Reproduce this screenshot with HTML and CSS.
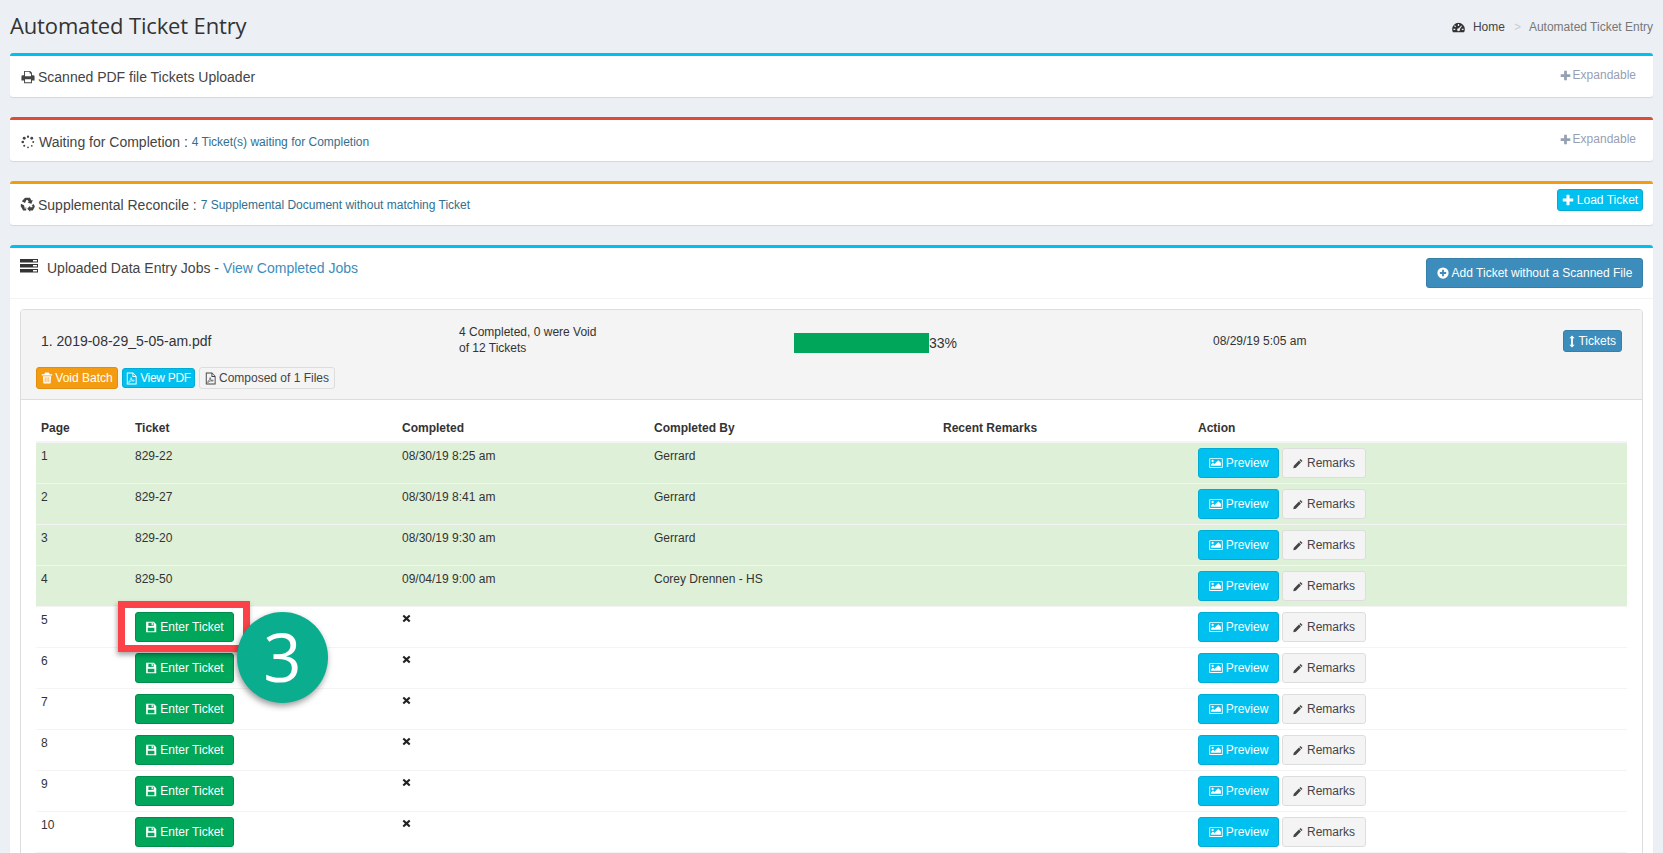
FILE: index.html
```html
<!DOCTYPE html>
<html lang="en">
<head>
<meta charset="utf-8">
<title>Automated Ticket Entry</title>
<link rel="stylesheet" href="styles.css">
</head>
<body>
<svg class="sprite" aria-hidden="true">
  <symbol id="i-print" viewBox="0 0 16 16"><path fill-rule="evenodd" d="M3.5 1h7L12.5 3v3H14a1.5 1.5 0 0 1 1.5 1.5V12h-3v3h-9v-3H.5V7.500A1.500 1.500 0 0 1 2 6h1.500zM4.600 2.100V7h6.800V4H9.800V2.100zM4.600 10.500v3.400h6.800v-3.400z"/></symbol>
  <symbol id="i-spin" viewBox="0 0 16 16"><circle cx="8" cy="2" r="1.300"/><circle cx="12.300" cy="3.700" r="1.600"/><circle cx="14" cy="8" r="1.100"/><circle cx="12.300" cy="12.300" r="1"/><circle cx="8" cy="14" r="1"/><circle cx="3.700" cy="12.300" r="1.200"/><circle cx="2" cy="8" r="1.500"/><circle cx="3.700" cy="3.700" r="1.700"/></symbol>
  <symbol id="i-recycle" viewBox="0 0 16 16"><path d="M5.400.8h5.200l1.600 2.800 1.400-.8-1.300 4.400-4.300-1 1.400-.8-1.300-2.300H6.900L5.300 6.400 1.900 4.500zM14.400 7.400l1.500 2.600-2.300 4.300H10.800v1.500L7.700 12.400l3.100-3.100v1.500h2.100l.6-1.100-1.100-.6zM1 7.200l3.300 1.600 1 4.200H2.700l-2-3.200zM6 10.800h.6v3.500H3.300l-1-1.700h3.700z"/></symbol>
  <symbol id="i-server" viewBox="0 0 18 14"><path fill-rule="evenodd" d="M0 0h18v3.600H0zM13 1v1.600h4V1zM0 5h18v3.600H0zM13 6v1.600h4V6zM0 10h18v3.600H0zM13 11v1.600h4V11z"/></symbol>
  <symbol id="i-plus" viewBox="0 0 16 16"><path d="M6 1h4v5h5v4h-5v5H6v-5H1V6h5z"/></symbol>
  <symbol id="i-pluscircle" viewBox="0 0 16 16"><path fill-rule="evenodd" d="M8 .5a7.500 7.500 0 1 1 0 15 7.500 7.500 0 0 1 0-15zM6.800 3.800v3H3.800v2.400h3v3h2.400v-3h3V6.800h-3v-3z"/></symbol>
  <symbol id="i-trash" viewBox="0 0 16 16"><path fill-rule="evenodd" d="M5.500 .8h5l1.100 2.200H15v1.500H1V3h3.400zM2.500 5.500h11l-.8 9.700H3.300zM5 7v6.500h1V7zM7.500 7v6.500h1V7zM10 7v6.500h1V7z"/></symbol>
  <symbol id="i-pdf" viewBox="0 0 14 16"><path fill-rule="evenodd" d="M1 .3h8L13.500 5v10.700H1zM2.200 1.500v13h10.100V6H8.200V1.500zM9.400 2.100v2.700h2.600z"/><path d="M6.300 6.800c.9 0 .6 2 1.100 3 .5.900 3-.3 3.100.9.100 1-2.300.3-3.400.3-1.200.1-3.100 2.500-3.800 1.800-.6-.8 2-1.800 2.500-3 .5-1.100 0-3 .5-3z" fill="none" stroke="currentColor" stroke-width=".9"/></symbol>
  <symbol id="i-updown" viewBox="0 0 8 16"><path d="M4 0l3.500 3.800H5.200v8.400h2.300L4 16 .5 12.200h2.300V3.800H.5z"/></symbol>
  <symbol id="i-image" viewBox="0 0 18 16"><path fill-rule="evenodd" d="M1 1.500h16a1 1 0 0 1 1 1v11a1 1 0 0 1-1 1H1a1 1 0 0 1-1-1v-11a1 1 0 0 1 1-1zM1.200 2.700v10.600h15.600V2.700zM2.500 11.800V9.700l2.500-2.500 2 2 5-5 3.500 3.500v4.100zM4.500 3.700a1.500 1.500 0 1 1 0 3 1.500 1.500 0 0 1 0-3z"/></symbol>
  <symbol id="i-pencil" viewBox="0 0 16 16"><path d="M12 .8l3.200 3.200-1.700 1.700-3.200-3.200zM9.500 3.300l3.200 3.200-8.200 8.200L.4 15.600l.9-4.100z"/></symbol>
  <symbol id="i-save" viewBox="0 0 16 16"><path fill-rule="evenodd" d="M1.500 1h10.300L15 4.200V15H1.500zM4.500 2.200v4.300h7V2.200zM3.700 9v4.800h8.800V9zM8.800 2.800h1.600v3H8.800z"/></symbol>
  <symbol id="i-times" viewBox="0 0 16 16"><path d="M3.500 1.500L8 5.500l4.500-4 2.500 2.500-4.200 4 4.200 4-2.500 2.500-4.500-4-4.500 4L1 12l4.200-4L1 4z"/></symbol>
  <symbol id="i-gauge" viewBox="0 0 16 16"><path fill-rule="evenodd" d="M8 2.200A7.800 7.800 0 0 0 .2 10c0 1.500.4 2.700 1 3.800h13.600c.6-1.100 1-2.300 1-3.800A7.800 7.800 0 0 0 8 2.200zM7.200 3.800h1.600v2.200H7.200zM3.500 5.200l1.500 1.500-1 1-1.500-1.500zM1.800 9.500h2.200v1.500H1.800zM12 9.500h2.200v1.500H12zM11.500 5.500l.8.700-2.600 3.600a1.800 1.800 0 1 1-1.300-.9z"/></symbol>
</svg>

<header class="page-head">
  <h1 class="page-title">Automated Ticket Entry</h1>
  <nav class="crumbs">
    <svg class="ico-gauge"><use href="#i-gauge"/></svg>
    <a class="crumb-home">Home</a>
    <span class="crumb-sep">&gt;</span>
    <span class="crumb-here">Automated Ticket Entry</span>
  </nav>
</header>

<section class="box box-info">
  <div class="box-head">
    <h3 class="box-title"><svg class="ico"><use href="#i-print"/></svg>Scanned PDF file Tickets Uploader</h3>
    <span class="expand"><svg class="ico-sm"><use href="#i-plus"/></svg>Expandable</span>
  </div>
</section>

<section class="box box-danger">
  <div class="box-head">
    <h3 class="box-title"><svg class="ico ico-spin"><use href="#i-spin"/></svg>Waiting for Completion : <small class="sub">4 Ticket(s) waiting for Completion</small></h3>
    <span class="expand"><svg class="ico-sm"><use href="#i-plus"/></svg>Expandable</span>
  </div>
</section>

<section class="box box-warning">
  <div class="box-head">
    <h3 class="box-title title-tight"><svg class="ico ico-recycle"><use href="#i-recycle"/></svg>Supplemental Reconcile : <small class="sub">7 Supplemental Document without matching Ticket</small></h3>
    <button class="btn btn-xs btn-cyan btn-load"><svg class="ico-sm"><use href="#i-plus"/></svg>Load Ticket</button>
  </div>
</section>

<section class="box box-info box-jobs">
  <div class="jobs-head">
    <h3 class="jobs-title"><svg class="ico-server"><use href="#i-server"/></svg>Uploaded Data Entry Jobs - <a class="link">View Completed Jobs</a></h3>
    <button class="btn btn-blue"><svg class="ico-sm"><use href="#i-pluscircle"/></svg>Add Ticket without a Scanned File</button>
  </div>
  <div class="jobs-body">
    <div class="panel">
      <div class="panel-head">
        <div class="batch-row">
          <div class="batch-name">1. 2019-08-29_5-05-am.pdf</div>
          <div class="batch-count">4 Completed, 0 were Void<br>of 12 Tickets</div>
          <div class="batch-progress"><span class="bar"></span><span>33%</span></div>
          <div class="batch-date">08/29/19 5:05 am</div>
          <button class="btn btn-xs btn-blue batch-toggle"><svg class="ico-updown"><use href="#i-updown"/></svg>Tickets</button>
        </div>
        <div class="batch-actions">
          <button class="btn btn-xs btn-orange act-void"><svg class="ico-sm"><use href="#i-trash"/></svg>Void Batch</button>
          <button class="btn btn-label btn-cyan act-view"><svg class="ico-pdf"><use href="#i-pdf"/></svg>View PDF</button>
          <button class="btn btn-xs btn-gray act-files"><svg class="ico-pdf"><use href="#i-pdf"/></svg>Composed of 1 Files</button>
        </div>
      </div>
      <div class="panel-body">
        <table class="tickets">
          <colgroup>
            <col class="c-page"><col class="c-ticket"><col class="c-done"><col class="c-by"><col class="c-notes"><col class="c-act">
          </colgroup>
          <thead>
            <tr><th>Page</th><th>Ticket</th><th>Completed</th><th>Completed By</th><th>Recent Remarks</th><th>Action</th></tr>
          </thead>
          <tbody>
            <tr class="done"><td>1</td><td>829-22</td><td>08/30/19 8:25 am</td><td>Gerrard</td><td></td><td><button class="btn btn-cyan"><svg class="ico-img"><use href="#i-image"/></svg>Preview</button><button class="btn btn-gray"><svg class="ico-pen"><use href="#i-pencil"/></svg>Remarks</button></td></tr>
            <tr class="done"><td>2</td><td>829-27</td><td>08/30/19 8:41 am</td><td>Gerrard</td><td></td><td><button class="btn btn-cyan"><svg class="ico-img"><use href="#i-image"/></svg>Preview</button><button class="btn btn-gray"><svg class="ico-pen"><use href="#i-pencil"/></svg>Remarks</button></td></tr>
            <tr class="done"><td>3</td><td>829-20</td><td>08/30/19 9:30 am</td><td>Gerrard</td><td></td><td><button class="btn btn-cyan"><svg class="ico-img"><use href="#i-image"/></svg>Preview</button><button class="btn btn-gray"><svg class="ico-pen"><use href="#i-pencil"/></svg>Remarks</button></td></tr>
            <tr class="done"><td>4</td><td>829-50</td><td>09/04/19 9:00 am</td><td>Corey Drennen - HS</td><td></td><td><button class="btn btn-cyan"><svg class="ico-img"><use href="#i-image"/></svg>Preview</button><button class="btn btn-gray"><svg class="ico-pen"><use href="#i-pencil"/></svg>Remarks</button></td></tr>
            <tr><td>5</td><td><button class="btn btn-green"><svg class="ico-sm"><use href="#i-save"/></svg>Enter Ticket</button></td><td><svg class="ico-x"><use href="#i-times"/></svg></td><td></td><td></td><td><button class="btn btn-cyan"><svg class="ico-img"><use href="#i-image"/></svg>Preview</button><button class="btn btn-gray"><svg class="ico-pen"><use href="#i-pencil"/></svg>Remarks</button></td></tr>
            <tr><td>6</td><td><button class="btn btn-green"><svg class="ico-sm"><use href="#i-save"/></svg>Enter Ticket</button></td><td><svg class="ico-x"><use href="#i-times"/></svg></td><td></td><td></td><td><button class="btn btn-cyan"><svg class="ico-img"><use href="#i-image"/></svg>Preview</button><button class="btn btn-gray"><svg class="ico-pen"><use href="#i-pencil"/></svg>Remarks</button></td></tr>
            <tr><td>7</td><td><button class="btn btn-green"><svg class="ico-sm"><use href="#i-save"/></svg>Enter Ticket</button></td><td><svg class="ico-x"><use href="#i-times"/></svg></td><td></td><td></td><td><button class="btn btn-cyan"><svg class="ico-img"><use href="#i-image"/></svg>Preview</button><button class="btn btn-gray"><svg class="ico-pen"><use href="#i-pencil"/></svg>Remarks</button></td></tr>
            <tr><td>8</td><td><button class="btn btn-green"><svg class="ico-sm"><use href="#i-save"/></svg>Enter Ticket</button></td><td><svg class="ico-x"><use href="#i-times"/></svg></td><td></td><td></td><td><button class="btn btn-cyan"><svg class="ico-img"><use href="#i-image"/></svg>Preview</button><button class="btn btn-gray"><svg class="ico-pen"><use href="#i-pencil"/></svg>Remarks</button></td></tr>
            <tr><td>9</td><td><button class="btn btn-green"><svg class="ico-sm"><use href="#i-save"/></svg>Enter Ticket</button></td><td><svg class="ico-x"><use href="#i-times"/></svg></td><td></td><td></td><td><button class="btn btn-cyan"><svg class="ico-img"><use href="#i-image"/></svg>Preview</button><button class="btn btn-gray"><svg class="ico-pen"><use href="#i-pencil"/></svg>Remarks</button></td></tr>
            <tr><td>10</td><td><button class="btn btn-green"><svg class="ico-sm"><use href="#i-save"/></svg>Enter Ticket</button></td><td><svg class="ico-x"><use href="#i-times"/></svg></td><td></td><td></td><td><button class="btn btn-cyan"><svg class="ico-img"><use href="#i-image"/></svg>Preview</button><button class="btn btn-gray"><svg class="ico-pen"><use href="#i-pencil"/></svg>Remarks</button></td></tr>
          </tbody>
        </table>
      </div>
    </div>
  </div>
</section>

<div class="callout-rect"></div>
<div class="callout-num">3</div>
</body>
</html>
```

FILE: styles.css
```css
* { box-sizing: border-box; }
html, body { height: 853px; overflow: hidden; }
body {
  margin: 0;
  padding: 0 10px;
  position: relative;
  background: #ecf0f5;
  color: #333;
  font-family: "Liberation Sans", Arial, sans-serif;
  font-size: 12px;
  line-height: 17px;
}
.sprite { position: absolute; width: 0; height: 0; overflow: hidden; }
svg { fill: currentColor; flex: none; }

.page-head {
  height: 53px;
  display: flex;
  justify-content: space-between;
  align-items: flex-start;
}
.page-title {
  margin: 9px 0 0;
  font-family: "Open Sans", sans-serif;
  font-weight: 400;
  font-size: 22px;
  line-height: 32px;
  letter-spacing: -.15px;
  color: #333;
}
.crumbs { display: flex; align-items: center; margin-top: 19px; color: #777; }
.ico-gauge { width: 13px; height: 13px; color: #333; margin-right: 8px; }
.crumb-home { color: #444; }
.crumb-sep { margin: 0 8px 0 9px; color: #ccc; }

.box {
  background: #fff;
  border-top: 3px solid #00c0ef;
  border-radius: 3px;
  box-shadow: 0 1px 1px rgba(0, 0, 0, .1);
  margin-bottom: 20px;
}
.box-info { border-top-color: #00c0ef; }
.box-danger { border-top-color: #dd4b39; }
.box-warning { border-top-color: #f39c12; }
.box-head {
  height: 41px;
  padding: 5px 10px 0 10px;
  display: flex;
  justify-content: space-between;
  align-items: flex-start;
}
.box-title {
  margin: 6px 0 0;
  font-size: 14px;
  font-weight: 400;
  line-height: 20px;
  color: #444;
  display: flex;
  align-items: center;
  white-space: pre;
}
.title-tight { margin-top: 5px; }
.ico { width: 14px; height: 14px; margin: 0 3px 0 1px; color: #444; }
.ico-spin { margin-right: 4px; }
.ico-recycle { width: 15px; height: 15px; margin: 0 3px 0 0; }
.sub { font-size: 12px; color: #31708f; margin-top: 1px; }
.expand { display: flex; align-items: center; margin: 6px 7px 0 0; color: #97a0b3; }
.ico-sm { width: 12px; height: 12px; margin-right: 3px; }
.ico-pen { width: 10px; height: 11px; margin-right: 4px; }
.ico-pdf { width: 11px; height: 13px; margin-right: 3px; }
.expand .ico-sm { width: 11px; height: 11px; margin-right: 2px; }

.btn {
  height: 30px;
  padding: 0 10px;
  border: 1px solid transparent;
  border-radius: 3px;
  font: 12px/17px "Liberation Sans", Arial, sans-serif;
  display: inline-flex;
  align-items: center;
  justify-content: center;
  vertical-align: top;
  white-space: nowrap;
}
.btn-xs { height: 22px; padding: 0 5px; }
.btn-label { height: 20px; padding: 0 5px; }
.btn-cyan { background: #00c0ef; border-color: #00acd6; color: #fff; }
.btn-blue { background: #3c8dbc; border-color: #367fa9; color: #fff; }
.btn-orange { background: #f39c12; border-color: #e08e0b; color: #fff; }
.btn-green { background: #00a65a; border-color: #008d4c; color: #fff; }
.btn-gray { background: #f4f4f4; border-color: #ddd; color: #444; }
.btn-load { margin-top: 0; width: 86px; padding: 0; }

.box-jobs { margin-bottom: 0; }
.jobs-head {
  height: 51px;
  padding: 10px;
  border-bottom: 1px solid #f4f4f4;
  display: flex;
  justify-content: space-between;
  align-items: flex-start;
}
.jobs-title {
  margin: 0;
  font-size: 14px;
  font-weight: 400;
  line-height: 20px;
  color: #444;
  display: flex;
  align-items: flex-start;
  white-space: pre;
}
.ico-server { width: 18px; height: 14px; margin: 1px 9px 0 0; color: #333; }
.link { color: #3c8dbc; }
.jobs-head .btn-blue { width: 217px; padding: 0; }

.jobs-body { padding: 10px; }
.panel { border: 1px solid #ddd; border-radius: 4px; }
.panel-head {
  height: 90px;
  padding: 14px 20px 0 15px;
  background: #f4f4f4;
  border-bottom: 1px solid #ddd;
  border-radius: 3px 3px 0 0;
}
.batch-row {
  display: grid;
  grid-template-columns: 423px 335px 419px 1fr auto;
  align-items: center;
  height: 32px;
  line-height: 16px;
}
.batch-name { padding-left: 5px; font-size: 14px; margin-top: 2px; }
.batch-progress { display: flex; align-items: center; font-size: 14px; margin-top: 6px; line-height: 20px; }
.bar { display: block; width: 135px; height: 20px; background: #00a65a; }
.batch-date { margin-top: 2px; }
.batch-toggle { margin-top: 2px; }
.ico-updown { width: 6px; height: 13px; margin-right: 3px; }
.batch-actions { display: flex; align-items: center; gap: 4px; margin-top: 11px; }
.batch-actions .btn { padding: 0; }
.batch-actions .ico-sm { margin-right: 2px; }
.act-void { width: 82px; }
.act-view { width: 73px; letter-spacing: -.3px; }
.act-files { width: 136px; }

.panel-body { padding: 15px; }
.tickets { width: 100%; table-layout: fixed; border-collapse: separate; border-spacing: 0; }
.c-page { width: 93px; }
.c-ticket { width: 267px; }
.c-done { width: 252px; }
.c-by { width: 289px; }
.c-notes { width: 255px; }
.tickets th {
  padding: 5px 6px 4px;
  text-align: left;
  font-weight: 700;
  border-bottom: 2px solid #f4f4f4;
}
.tickets td {
  height: 41px;
  padding: 5px 6px 5px;
  vertical-align: top;
  border-bottom: 1px solid #f4f4f4;
}
.tickets th:first-child, .tickets td:first-child { padding-left: 5px; }
.done td { background: #dff0d8; }
.tickets .btn-gray { margin-left: 3px; }
.ico-img { width: 14px; height: 12px; margin-right: 3px; }
.tickets .btn-cyan { width: 81px; padding: 0; }
.tickets .btn-gray { width: 84px; padding: 0; }
.tickets .btn-green { width: 99px; padding: 0; }
.ico-x { display: block; width: 9px; height: 9px; margin-top: 2px; color: #222; }

.callout-rect {
  position: absolute;
  left: 118px;
  top: 601px;
  width: 132px;
  height: 51px;
  border: 7px solid #fb4248;
  box-shadow: -1px 3px 5px rgba(0, 0, 0, .35);
}
.callout-num {
  position: absolute;
  left: 237px;
  top: 612px;
  width: 91px;
  height: 91px;
  border-radius: 50%;
  background: #0aae8f;
  color: #fff;
  font-family: "Open Sans", sans-serif;
  font-size: 67px;
  line-height: 89px;
  text-align: center;
  box-shadow: -1px 3px 6px rgba(0, 0, 0, .4);
}
```
